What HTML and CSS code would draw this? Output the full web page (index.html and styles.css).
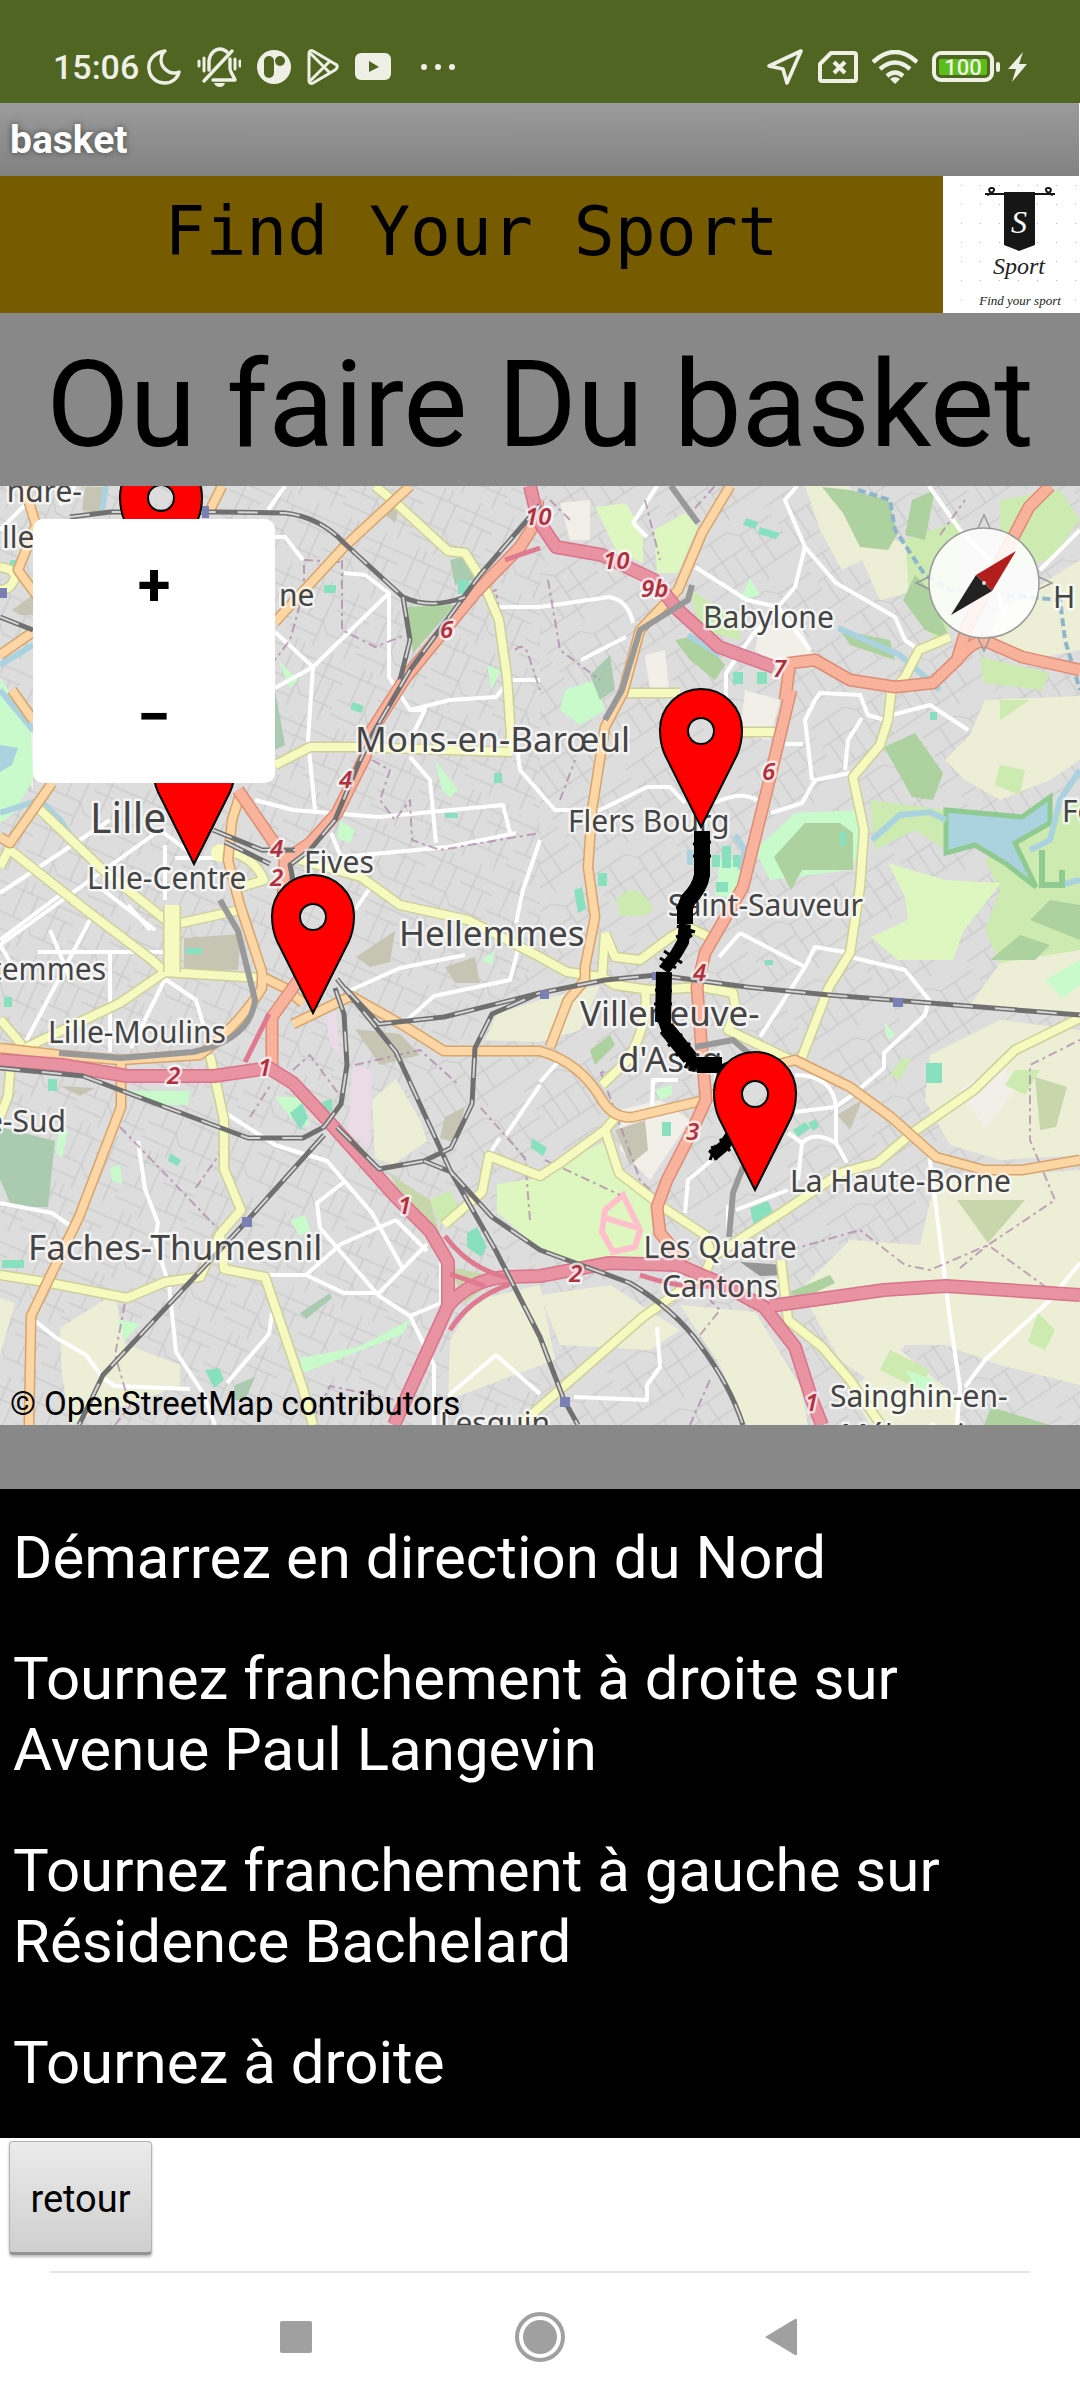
FILE: index.html
```html
<!DOCTYPE html>
<html lang="fr">

<head>
    <meta charset="UTF-8">
    <meta name="viewport" content="width=device-width, initial-scale=1.0">
    <title>basket</title>
    <link rel="stylesheet" href="styles.css">
</head>

<body>

    <!-- Status bar -->
    <div class="status-bar">
        <div class="status-group">
            <div class="status-pair">
                <span class="time">15:06</span>
                <svg width="34" height="36" viewBox="0 0 34 36" fill="none" stroke="#eef0e6" stroke-width="3.4" stroke-linejoin="round"><path d="M18 2C6 4 1 12 2 20c1 9 8 14 16 14 7 0 13-5 14-11-5 2-10 1-14-3-5-5-5-12-1-18z" /></svg>
            </div>
            <svg width="44" height="40" viewBox="0 0 44 40" fill="none" stroke="#eef0e6" stroke-width="3.4" stroke-linecap="round">
                <path d="M7 34L35 4" />
                <path d="M12 23V14C13 6 18 2 23 2c3 0 5 1 7 3M33 12v10c1 5 4 7 5 11H16" stroke-linejoin="round" />
                <path d="M2 14v5M7 11v13M43 14v5M38 12v10" stroke-width="3" />
                <path d="M17 36h11c-1 3-3 4-5 4s-5-1-6-4z" fill="#eef0e6" stroke="none" />
            </svg>
            <svg width="34" height="34" viewBox="0 0 34 34">
                <circle cx="17" cy="17" r="17" fill="#eef0e6" />
                <rect x="7" y="6" width="10" height="22" rx="5" fill="#516522" />
                <circle cx="23" cy="11" r="5" fill="#516522" />
            </svg>
            <svg width="32" height="36" viewBox="0 0 32 36" fill="none" stroke="#eef0e6" stroke-width="3" stroke-linejoin="round">
                <path d="M2 4c0-2 2-3 4-2l22 13c3 1 3 4 0 6L6 34c-2 1-4 0-4-2z" />
                <path d="M3 4l20 20M3 32l20-20" />
            </svg>
            <svg width="36" height="27" viewBox="0 0 36 27">
                <rect width="36" height="27" rx="6" fill="#eef0e6" />
                <path d="M14 8v11l10-5z" fill="#516522" />
            </svg>
            <svg width="48" height="8" viewBox="0 0 48 8" fill="#eef0e6"><circle cx="17" cy="4" r="3" /><circle cx="31" cy="4" r="3" /><circle cx="45" cy="4" r="3" /></svg>
        </div>
        <div class="status-group status-right">
            <svg width="38" height="38" viewBox="0 0 38 38" fill="none" stroke="#eef0e6" stroke-width="3.6" stroke-linejoin="round"><path d="M35 3L21 35l-4-14L3 18z" /></svg>
            <svg width="40" height="32" viewBox="0 0 40 32" fill="none" stroke="#eef0e6" stroke-width="4" stroke-linejoin="round">
                <path d="M13 2h23q2 0 2 2v24q0 2-2 2H4q-2 0-2-2V13z" />
                <path d="M16 11l11 11M27 11L16 22" />
            </svg>
            <svg width="46" height="34" viewBox="0 0 46 34" fill="none" stroke="#eef0e6" stroke-width="4.4">
                <path d="M1 12q22-20 44 0" /><path d="M8 19q15-13 30 0" /><path d="M15 26q8-7 16 0" />
                <path d="M18 29q5-4 10 0l-5 5z" fill="#eef0e6" stroke="none" />
            </svg>
            <div class="status-pair">
                <svg width="68" height="32" viewBox="0 0 68 32">
                    <rect x="2" y="2" width="58" height="27" rx="7" fill="none" stroke="#eef0e6" stroke-width="4" />
                    <rect x="7" y="8" width="48" height="16" rx="2" fill="#5bbd18" />
                    <rect x="64" y="11" width="4" height="10" rx="2" fill="#eef0e6" />
                    <text class="battery-level" x="31" y="24">100</text>
                </svg>
                <svg width="19" height="30" viewBox="0 0 19 30" fill="#eef0e6"><path d="M15 0L0 17h8L4 30l15-18h-8z" /></svg>
            </div>
        </div>
    </div>

    <div class="title-bar">basket</div>

    <!-- App header -->
    <header class="header">
        <div class="brand">Find Your Sport</div>
        <svg class="logo" viewBox="0 0 137 137" role="img" aria-label="Sport">
            <defs>
                <pattern id="dots" x="17" y="8" width="19" height="19" patternUnits="userSpaceOnUse">
                    <rect x="1" y="1" width="1" height="1" fill="#b5b5b5" />
                </pattern>
            </defs>
            <rect width="137" height="137" fill="#fff" />
            <rect width="137" height="137" fill="url(#dots)" />
            <path d="M42 18h19M92 18h20M44 19c8-2 9-8 4-7-4 1-1 6 4 6M110 19c-8-2-9-8-4-7 4 1 1 6-4 6" fill="none" stroke="#161616" stroke-width="2" />
            <path d="M61 16h31v53l-16 6-15-6z" fill="#161616" />
            <text class="logo-letter" x="76" y="57">S</text>
            <text class="logo-name" x="76" y="98">Sport</text>
            <text class="logo-tag" x="77" y="129">Find your sport</text>
        </svg>
    </header>

    <h1 class="page-title">Ou faire Du basket</h1>

    <!-- Map -->
    <div class="map">
        <svg class="map-canvas" viewBox="0 486 1080 939" role="img" aria-label="Carte de Lille">
            <defs>
                <pattern id="streets" width="74" height="66" patternUnits="userSpaceOnUse" patternTransform="rotate(24)">
                    <path d="M0 12h74M0 40h30l8 10h36M14 0v40M30 12v54M52 0v50M38 24h36M64 24v42M0 56h30M22 0v12" fill="none" stroke="#c5c5c5" stroke-width="1" />
                </pattern>
                <pattern id="streets-b" width="88" height="70" patternUnits="userSpaceOnUse" patternTransform="rotate(-34)">
                    <path d="M0 8h40l10 10h38M0 30h50M20 8v50M50 18v52M0 58h88M66 18v40M50 38h38M8 30v28M34 30v28" fill="none" stroke="#c5c5c5" stroke-width="1" />
                </pattern>

                <g id="yellow">
                    <path d="M375 486L396 503 448 551 465 553 482 580 499 620 507 677 512 752" />
                    <path d="M275 765L310 747 355 747 512 752" />
                    <path d="M37 807L103 870 172 925 240 910M10 850L86 910 152 960 165 972" />
                    <path d="M0 867L10 847M165 972L120 1003 25 1048M165 972L260 978" />
                    <path d="M215 850Q250 850 264 880L238 888M0 567Q18 570 14 580T0 590" />
                    <path d="M210 1055L224 1120 224 1169 241 1210 220 1234 224 1269 265 1277 303 1389 313 1425" />
                    <path d="M0 1275L45 1282 127 1298 165 1282 200 1277 220 1234M12 1050L8 1096 0 1117M0 1019L22 1045" />
                    <path d="M300 860L361 877 400 905 468 920 540 957 567 972 602 977 615 985 650 990 702 987 733 993 736 1010 728 1030 795 1062" />
                    <path d="M605 933L615 957 640 960 671 937 688 927 709 937M605 933L602 977" />
                    <path d="M626 693L680 693M735 732L775 732M645 990Q650 1020 628 1060L602 1085" />
                    <path d="M950 637L919 650 905 677 891 693 888 720 880 745 853 777 864 830 860 887 850 953 829 987 802 1057" />
                    <path d="M1080 1018L1015 1050 974 1090 912 1133 877 1163 840 1173 781 1213 712 1257 705 1273 643 1317 540 1407 520 1425" />
                    <path d="M444 1225L482 1192 489 1156 540 1176 560 1163 605 1130 619 1113M605 1130L619 1173 667 1210 705 1235 712 1257" />
                    <path d="M781 1260L788 1320 822 1347 850 1380 881 1425" />
                </g>
                <g id="orange">
                    <path d="M730 486L702 533 678 590 640 630 623 693 605 727 592 810 588 867 595 917 585 967 585 980 568 1000 550 1047" />
                    <path d="M293 1024L351 996 406 1027 444 1051 540 1051Q580 1062 602 1100 614 1119 633 1117L705 1100 755 1070 795 1060 850 1087 891 1117 936 1157 984 1170 1022 1170 1080 1160" />
                    <path d="M410 486L344 547 275 622M222 486L210 510" />
                    <path d="M0 1048L60 1055 120 1060 200 1055Q240 1024 262 988L262 972 240 905 228 860 232 820 240 795" />
                    <path d="M121 1062L121 1107 79 1217 31 1316 29 1425M52 783L10 843 0 837" />
                    <path d="M24 486L36 525 18 570 40 600M0 655L33 632M265 978L285 988 303 1003M12 690L33 720" />
                </g>
                <g id="trunk">
                    <path d="M538 500L534 525 520 547 475 593 406 677 372 730 365 757 337 813 310 843 285 860 283 900" />
                    <path d="M238 790L279 850M300 978L272 1017 272 1065" />
                    <path d="M1050 486L1029 507 1005 553 967 627 957 660 933 683 895 687 850 680 815 660 790 663 785 700" />
                    <path d="M957 660Q975 638 988 642L1022 657 1080 670" />
                    <path d="M791 690L767 790 743 887 705 953 697 987 702 1053 706 1100 691 1133 667 1180 657 1207 660 1233 685 1263" />
                </g>
                <g id="motorway">
                    <path d="M530 486L538 520 556 547 602 555 654 580 678 610 719 647 774 667" />
                    <path d="M0 1060L62 1065 127 1076 214 1076 269 1068 293 1083 331 1124 396 1197 430 1231 448 1262 448 1306 394 1425" />
                    <path d="M448 1306Q470 1280 505 1277L540 1276 609 1263 678 1265 720 1283 764 1307 795 1347 812 1400 822 1425" />
                    <path d="M770 1306L884 1290 946 1286 1080 1295" />
                </g>
                <g id="rail">
                    <path d="M70 517L110 512 220 512 285 513Q320 517 344 543L403 597Q430 610 465 597M403 597L410 640 400 680" />
                    <path d="M540 505L480 575 410 670 372 735 358 765 335 820 310 850 290 865 293 880M213 830L262 850 295 850M225 842L270 864M0 617L33 630" />
                    <path d="M0 1068L83 1076 165 1107 248 1138 303 1138 324 1127 341 1104 347 1065 344 1014 335 988" />
                    <path d="M324 1135L245 1223 103 1375 79 1425M337 979L396 1052 451 1172 496 1251 540 1337 564 1400 578 1425" />
                    <path d="M337 1127L379 1169 424 1161 451 1148 472 1104 475 1048 492 1014 540 993M424 1161L451 1172" />
                    <path d="M345 988L379 1024 444 1017 540 993 605 980 657 975 747 987 829 995 1080 1015" />
                    <path d="M451 1172L492 1217 540 1250 630 1283Q675 1310 700 1345 730 1385 743 1425" />
                </g>
                <path id="marker" fill-rule="evenodd" d="M0 0L-36 -72C-40 -81 -41 -89 -41 -97A41 41 0 0 1 41 -97C41 -89 40 -81 36 -72ZM-13 -96A13 13 0 1 0 13 -96A13 13 0 1 0 -13 -96Z" />
            </defs>

            <!-- Built-up ground -->
            <rect y="486" width="1080" height="939" fill="#dddddd" />
            <path d="M0 486H540V960L400 1100 540 1300V1425H0z" fill="url(#streets)" />
            <path d="M540 486H1080V1425H540V1300L400 1100 540 960z" fill="url(#streets-b)" />

            <!-- Fields -->
            <g fill="#ecefd5">
                <path d="M805 486L850 486 868 530 908 545 908 593 880 600 862 560 842 570 820 530z" />
                <path d="M1000 610L1080 560V650L1030 660 990 635zM970 735L985 700 1080 696V760L1050 780 1000 800 965 780 945 760z" />
                <path d="M970 1005L1000 963 1080 945V1012zM930 1055L1000 1020 1080 1030V1155L1000 1160 950 1145 925 1100z" />
                <path d="M800 1290L850 1240 920 1245 935 1180 1080 1170V1385L1000 1365 945 1345 905 1345 875 1385 840 1360z" />
                <path d="M540 1295L610 1285 680 1330 650 1350 560 1345zM680 1305L755 1312 800 1385 808 1425H746L720 1365z" />
                <path d="M850 1390L900 1350 960 1400 960 1425H870zM448 1400L450 1340 475 1300 540 1285 555 1360z" />
                <path d="M372 1100L396 1079 420 1120 427 1141 393 1165 375 1158zM485 1040L497 1014 540 1000 600 985 580 1030 540 1042z" />
                <path d="M60 1328L115 1293 125 1344 180 1365 180 1385 130 1405 100 1410 70 1425 62 1375zM0 1298L15 1303 0 1355z" />
            </g>
            <g fill="#f2efe9">
                <path d="M760 625L800 625 815 660 780 670 755 650zM560 503L590 500 590 540 570 540zM620 1110L660 1100 690 1120 650 1180 620 1150zM960 1090L1000 1060 1015 1090 985 1130z" />
                <path d="M745 690L780 700 770 740 740 735zM10 690L33 735 33 790 20 760zM645 655L665 650 670 700 650 690z" />
            </g>

            <!-- Parks and woods -->
            <g fill="#cdebb0">
                <path d="M1000 500L1060 490 1080 520 1050 560 1000 570zM980 657L1050 673 1042 690 984 683zM905 540L960 520 960 620 935 640 910 600z" />
                <path d="M985 860L1080 800V950L1000 963 985 930 1000 890zM870 800L946 810 946 850 915 830 875 850zM690 590L740 620 740 640 700 630z" />
                <path d="M1015 1070L1040 1070 1025 1095 1005 1085zM900 1060L912 1058 900 1080 890 1075zM1038 1313L1055 1330 1045 1350 1028 1342zM890 1350L930 1370 920 1390 880 1370zM1000 700L1030 700 1000 720zM1000 765L1025 770 1020 795 995 785z" />
                <path d="M430 1200L450 1190 460 1210 440 1225zM616 900Q632 880 648 900T620 915z" />
            </g>
            <g fill="#def6c0">
                <path d="M595 507L626 503 643 533 643 563 616 550zM654 530L685 513 698 527 678 573 657 573z" />
                <path d="M888 863L945 880 1001 883 964 930 953 960 898 960 871 937 908 920 905 897zM497 1184L540 1178 575 1155 605 1142 626 1173 654 1207 650 1255 600 1268 540 1250 497 1212z" />
            </g>
            <g fill="#c8facc">
                <path d="M0 677L31 727 33 780 14 813 0 823zM755 850L795 813 860 810 866 840 850 870 770 880zM565 690L595 680 605 710 580 725 560 710zM300 1358L358 1347 410 1320 403 1334 303 1373zM127 1091L190 1091 188 1105 160 1105z" />
                <path d="M1045 980L1080 960V985L1062 998zM340 820L355 830 350 843 337 838zM278 660L298 680 290 688zM117 1319L140 1324 125 1340zM740 600L760 595 750 578zM59 1122L68 1132 62 1158 56 1153zM435 760L458 790 450 797 442 790zM487 665L500 670 492 690zM482 960L495 950 492 965zM905 1370L935 1380 920 1392zM275 1097L300 1097 310 1127 290 1117zM290 1220L305 1215 310 1230 300 1236zM186 1220L196 1236 190 1226z" />
                <path d="M720 860L745 860 740 900 715 895zM110 1169L120 1164 122 1184 112 1181zM655 1090L672 1085 672 1095 660 1100zM883 1020L895 1035 888 1040z" />
            </g>
            <g fill="#aed1a0">
                <path d="M822 487L850 490 888 500 898 533 888 550 860 547 843 513zM774 857L805 823 840 823 853 833 853 870 802 870 791 890z" />
                <path d="M884 747L915 733 943 773 933 800 912 797zM406 607L455 605 413 653zM903 600L915 575 930 590 950 640 925 630zM990 960L1020 935 1050 945 1035 960zM912 500L935 490 925 540 905 535z" />
                <path d="M675 640L700 635 725 665 715 680 690 660zM840 630L890 640 895 660 850 645zM590 1050L610 1035 615 1045 595 1065zM991 1407L1050 1425H984zM1080 940L1030 920 1050 900 1080 905zM790 1292L830 1275 835 1283 800 1300z" />
                <path d="M590 675L610 655 615 690 600 700z" fill="#aacbaf" />
            </g>
            <g fill="#c8d7ab">
                <path d="M957 1200L1025 1200 988 1243zM1035 1077L1067 1087 1056 1127 1040 1130zM390 1174L430 1200 440 1236 400 1195zM450 1267L500 1277 465 1303z" />
            </g>
            <g fill="#aacbaf">
                <path d="M0 1127L55 1141 48 1207 12 1207 0 1179zM275 690L285 745 275 750zM300 1313L330 1293 332 1298 306 1319zM235 1385L255 1377 245 1400 232 1400zM450 560L470 555 475 580 455 585z" />
            </g>
            <g fill="#c6c5b3">
                <path d="M184 938L241 934 238 970 184 970zM85 487L108 487 100 515 82 510zM12 610L33 595 33 615 20 615zM356 957L395 931 390 962 370 967zM445 967L475 957 480 983 455 983zM355 1029L400 1034 420 1055 380 1065zM615 1130L645 1120 648 1150 630 1165zM837 1115L862 1100 850 1130zM445 1117L465 1107 455 1143 440 1138zM380 510L400 505 395 523zM60 1086L95 1088 80 1096z" />
            </g>
            <path d="M353 1065L372 1070 370 1148 348 1132zM325 1014L336 1012 340 1055 330 1045z" fill="#ebdbe8" />

            <!-- Water -->
            <path d="M946 810L1022 817 1050 797 1050 823 1015 843 1036 887 1005 863 975 845 946 853z" fill="#aad3df" stroke="#8fca91" stroke-width="5" />
            <g fill="none" stroke="#aad3df" stroke-width="6">
                <path d="M872 840L900 815 930 812 946 820M1080 770L1060 800 1050 840 1030 850M0 665L33 645M0 690L33 730M0 813L40 800 60 820 80 850M838 628L900 655 940 690M106 486L102 510M688 635L720 655" />
                <path d="M858 490L890 500 895 530 925 575 950 590 1060 600 1065 640 1080 690" stroke="#8fb5cc" stroke-width="4" stroke-dasharray="8 4" />
                <path d="M735 835L745 850 740 870M690 850V865M1060 885L1080 880" />
            </g>
            <path d="M0 745L18 748 12 765 0 772z" fill="#aad3df" />
            <path d="M1042 850V885H1062V870" fill="none" stroke="#8fca91" stroke-width="6" />

            <!-- Sports grounds -->
            <g fill="#88e0be">
                <path d="M324 585h12v8h-12zM458 580h11v14h-11zM353 702l11 4-3 7-11-4zM494 773h8v10h-8zM445 813h13v5h-13zM746 518l12 4-3 7-12-4zM760 527l20 6-4 6-18-5zM733 672h10v12h-10zM757 672h10v12h-10zM712 855h8v12h-8zM722 846h9v22h-9zM733 855h7v12h-7zM716 882h12v10h-12zM598 873h9v13h-9zM574 890l8-3 4 22-8 4zM926 1063h16v20h-16zM662 1122h9v14h-9z" />
                <path d="M750 1208l18-7 9 20-22 10zM793 1130l12-8 5 6-12 9zM808 1123l8-4 3 8-6 4zM290 1113l12-10 6 15-8 12zM322 1102l10-3v12l-8 2zM467 1233l10-6 10 20-6 10-14-10zM170 1153l11 7-3 6-10-5zM48 1079h9v12h-9zM186 948h16v6h-16zM2 1260h22v8H2zM205 1370l14-2 5 12-10 8zM4 997h8v10H4zM10 560h12v8H10zM840 832h6v14h-6zM930 712h7v8h-7zM315 936h8v6h-8zM765 960h8v5h-8zM532 1138l15 10-4 8-12-8z" />
            </g>
            <path d="M605 1210L623 1195 640 1230 635 1247 613 1252 602 1232zM605 1218L638 1228" fill="none" stroke="#ffc0cb" stroke-width="6" />
            <path d="M740 1262L785 1265 785 1275 760 1276z" fill="#969696" />

            <!-- Local roads -->
            <g class="local">
                <path d="M275 537L285 537 303 560M344 573L365 575 389 593 389 677 410 710 450 700 496 697 510 680 540 680M389 593L313 667 308 740 315 810M275 632L313 667 275 688" />
                <path d="M255 800L293 810 379 817 503 805 510 833M410 757L430 780 436 843M331 833L341 857 448 847 516 833M540 840L523 890 516 923M499 607H540M285 486L268 510M410 710L425 710 410 740" />
                <path d="M517 747L520 770 555 810 600 810 647 787 670 787 685 803M715 803Q740 790 757 800M771 813L802 803 815 780 850 773M812 780L805 720 815 700 820 693 860 695 868 715 885 720M845 770L848 740 862 718M888 716L930 705 968 730M785 744H803" />
                <path d="M797 486L785 500 805 547 795 587 778 607 754 633 726 673 726 700M805 547L836 583 895 617 905 640 919 650M695 567L747 600 778 607 810 650M657 486L633 523 647 537M540 607L609 597Q628 600 633 623M581 660L626 637M929 486L960 530 990 560 1005 620M1080 530L1040 570" />
                <path d="M850 957L905 970 929 1000 925 1015 884 1053 884 1068 850 1097 835 1107 795 1112M740 933L805 967 760 1037M805 967L815 947 850 953M740 933L719 957M929 1153L936 1207 950 1320 960 1387 957 1425M1080 1263L1050 1300 985 1360 965 1387" />
                <path d="M795 1075Q833 1075 836 1107V1143L847 1163M788 1133L802 1143Q815 1130 836 1143M802 1143L798 1180M712 1160L688 1180 685 1213M736 1210L788 1190M574 1397L647 1400 647 1385 660 1367 657 1327M652 1110L653 1080 678 1080M540 1082L560 1060M728 1205V1235" />
                <path d="M138 1141L145 1189 158 1223 155 1241 169 1285 176 1352 203 1393 215 1425M34 1320L55 1337 86 1355 103 1378 115 1386 190 1389M227 1383L269 1334 272 1313M0 1203L52 1213 72 1227M227 1114L275 1145 327 1161 372 1213 403 1269M344 1182L317 1203 320 1228 379 1296 410 1316 441 1303V1262" />
                <path d="M396 1220L341 1244 306 1275H269M306 1275L344 1293H379L427 1244M396 1220L427 1251M410 1316L434 1365V1425M448 1396L496 1355 540 1394M351 990L400 968 465 955M406 1021L434 996 510 980 523 931M540 1085L506 1135M0 945L160 830 200 860M0 893L110 820M0 945L20 978M490 1153L500 1138" />
                <path d="M38 952H165M110 950V1052M24 1045L90 920M165 979L131 1048M165 979L196 1000 203 1024M0 940L60 895M90 880L155 930M175 858H215M165 845V900M355 910L372 885M0 530L30 500M60 505L75 486M128 905L150 930M70 978L50 930" />
            </g>

            <g class="boundary">
                <path d="M304 565V590L290 640 275 660M342 560V630L375 647 405 635M304 560L342 562M470 600L496 590 505 655M515 650Q525 640 530 660L540 690M372 760L390 770 380 800 395 820 410 800 412 840 440 850 540 833" />
                <path d="M615 1080L600 1070 640 1180 680 1220 710 1240M790 1250L860 1230 905 1265 930 1270 988 1245 1055 1200 1030 1140 1030 1065 1080 1040M960 1268L988 1245 1050 1290M545 1160L620 1195M700 1335L720 1310 710 1300" />
                <path d="M120 1127L220 1231M224 1148L195 1189M293 1070L310 1055 340 1096M250 1117L270 1086M355 1065L420 1050 460 1086M115 1425L130 1406 115 1355 125 1303M310 1425L330 1386 400 1401M548 580L560 650 600 680M645 500L660 560M940 535L965 500M570 520L550 500M695 508L715 486M560 800L575 760M530 1220L525 1158 480 1107M690 1425L710 1380" />
            </g>

            <use href="#yellow" class="road yellow-edge" />
            <use href="#yellow" class="road yellow" />
            <path d="M172 905V972" class="road yellow-edge wide-edge" />
            <path d="M172 905V972" class="road yellow wide" />
            <circle cx="220" cy="853" r="9" fill="#f7fabf" />
            <use href="#orange" class="road orange-edge" />
            <use href="#orange" class="road orange" />
            <use href="#trunk" class="road trunk-edge" />
            <use href="#trunk" class="road trunk" />
            <use href="#motorway" class="road motorway-edge" />
            <use href="#motorway" class="road motorway" />
            <path d="M269 1014L245 1062M445 1236Q470 1270 510 1278M450 1274L485 1286M450 1330Q470 1298 510 1284M640 1275Q690 1292 720 1284M505 560L540 548" class="road ramp" />
            <path d="M220 900L238 931 255 1000Q250 1040 193 1052L121 1058 59 1053M671 486L698 523M692 585L688 600 640 630 622 690 605 720M695 1047L733 1040 753 1057M743 1167L733 1193 729 1237" class="road metro" />
            <use href="#rail" class="rail" />
            <use href="#rail" class="rail-dash" />

            <g fill="#7b80b4">
                <path d="M540 990h9v9h-9zM893 998h10v9h-10zM242 1217h10v10h-10zM560 1397h10v10h-10zM202 506h7v12h-7zM652 972h9v8h-9zM0 588h7v10H0z" />
            </g>

            <!-- Places -->
            <g class="place">
                <text x="279" y="606">ne</text>
                <text x="82" y="502" text-anchor="end">ndre-</text>
                <text x="2" y="548">lle</text>
                <text x="703" y="628">Babylone</text>
                <text x="1053" y="608">H</text>
                <text x="1062" y="822">Fo</text>
                <text x="568" y="832">Flers Bourg</text>
                <text x="668" y="916">Saint-Sauveur</text>
                <text x="87" y="889">Lille-Centre</text>
                <text x="304" y="873">Fives</text>
                <text x="106" y="980" text-anchor="end">temmes</text>
                <text x="48" y="1043">Lille-Moulins</text>
                <text x="66" y="1132" text-anchor="end">e-Sud</text>
                <text x="790" y="1192">La Haute-Borne</text>
                <text x="720" y="1258" text-anchor="middle">Les Quatre</text>
                <text x="720" y="1297" text-anchor="middle">Cantons</text>
                <text x="830" y="1407">Sainghin-en-</text>
                <text x="910" y="1446" text-anchor="middle">Mélantois</text>
                <text x="550" y="1434" text-anchor="end">Lesquin</text>
            </g>
            <g class="place town">
                <text x="355" y="752">Mons-en-Barœul</text>
                <text x="399" y="946">Hellemmes</text>
                <text x="28" y="1260">Faches-Thumesnil</text>
                <text x="580" y="1026">Villeneuve-</text>
                <text x="618" y="1072">d'Ascq</text>
            </g>
            <text class="place city" x="90" y="833">Lille</text>
            <g class="junction">
                <text x="525" y="525">10</text>
                <text x="603" y="569">10</text>
                <text x="641" y="597">9b</text>
                <text x="773" y="677">7</text>
                <text x="440" y="638">6</text>
                <text x="339" y="788">4</text>
                <text x="270" y="857">4</text>
                <text x="270" y="886">2</text>
                <text x="762" y="780">6</text>
                <text x="693" y="981">4</text>
                <text x="686" y="1140">3</text>
                <text x="167" y="1084">2</text>
                <text x="258" y="1076">1</text>
                <text x="398" y="1214">1</text>
                <text x="569" y="1282">2</text>
                <text x="805" y="1411">1</text>
            </g>

            <!-- Route -->
            <g class="route">
                <path d="M702 831L702 875Q700 888 688 900L685 908 685 924M664 972L663 1022M666 1028L690 1058M697 1065H722" />
                <path class="route-zigzag" d="M685 924L683 942 676 954 664 970M663 1018L668 1032 690 1058 698 1068M722 1064L730 1082M732 1134L724 1146 712 1156" />
                <path class="route-ticks" d="M693 844l18-2M693 856h18M676 908l18-5M677 926l18 6M676 937l18-6M678 945l14-10M680 948l10-15M664 951l18 12M660 958l16 10M660 967l15-8M655 990l17 1M654 1004h18M656 1020l17 8M668 1046l14-12M676 1056l14-13M685 1068l9-16M690 1071l4-17M716 1060l10 16M709 1151l12 2M710 1160l6-15M716 1160l-4-14M720 1139l10 12" />
            </g>

            <g class="markers">
                <use href="#marker" x="161" y="594" />
                <use href="#marker" x="194" y="864" />
                <use href="#marker" x="313" y="1013" />
                <use href="#marker" x="701" y="827" />
                <use href="#marker" x="755" y="1190" />
            </g>
        </svg>

        <div class="zoom">
            <button type="button" aria-label="Zoom avant">+</button>
            <button type="button" aria-label="Zoom arrière">−</button>
        </div>

        <svg class="compass" viewBox="0 0 140 140" role="img" aria-label="Boussole">
            <circle cx="70" cy="70" r="55" fill="#fff" fill-opacity="0.86" stroke="#999" stroke-width="1.5" />
            <path d="M64 15L70 2l6 13M64 125l6 13 6-13M15 64L2 70l13 6M125 64l13 6-13 6" fill="none" stroke="#999" stroke-width="1.5" />
            <path d="M102 38L78 78 62 62z" fill="#b21e1e" />
            <path d="M37 102L62 62 78 78z" fill="#222" />
            <circle cx="70" cy="70" r="2" fill="#ddd" />
        </svg>

        <div class="attribution">© OpenStreetMap contributors</div>
    </div>

    <!-- Directions -->
    <ol class="directions">
        <li>Démarrez en direction du Nord</li>
        <li>Tournez franchement à droite sur Avenue Paul Langevin</li>
        <li>Tournez franchement à gauche sur Résidence Bachelard</li>
        <li>Tournez à droite</li>
    </ol>

    <footer class="footer">
        <button type="button" class="back">retour</button>
    </footer>

    <!-- System navigation -->
    <nav class="system-nav">
        <button type="button" aria-label="Applications récentes">
            <svg width="50" height="52" viewBox="0 0 50 52"><rect x="9" y="10" width="32" height="32" rx="2" fill="#a0a0a0" /></svg>
        </button>
        <button type="button" aria-label="Accueil">
            <svg width="50" height="52" viewBox="0 0 50 52"><circle cx="25" cy="26" r="23" fill="none" stroke="#a0a0a0" stroke-width="4" /><circle cx="25" cy="26" r="17" fill="#a0a0a0" /></svg>
        </button>
        <button type="button" aria-label="Retour">
            <svg width="50" height="52" viewBox="0 0 50 52"><path d="M6 26L36 8q2-1 2 1v34q0 2-2 1z" fill="#a0a0a0" /></svg>
        </button>
    </nav>

</body>

</html>
```
FILE: styles.css
```css
* {
    box-sizing: border-box;
}

body {
    margin: 0;
    background-color: #ffffff;
    font-family: Roboto, sans-serif;
    color: #000000;
}

button {
    margin: 0;
    padding: 0;
    border: none;
    background: none;
    font-family: inherit;
    color: inherit;
    cursor: pointer;
}

svg {
    display: block;
    flex-shrink: 0;
}

/* Status bar */
.status-bar {
    display: flex;
    justify-content: space-between;
    align-items: center;
    height: 103px;
    padding: 30px 53px 0;
    background-color: #516522;
}

.status-group {
    display: flex;
    align-items: center;
    gap: 16px;
}

.status-right {
    gap: 14px;
}

.status-pair {
    display: flex;
    align-items: center;
    gap: 8px;
}

.time {
    font-size: 34px;
    font-weight: 500;
    line-height: 40px;
    color: #eef0e6;
}

.battery-level {
    font-size: 22px;
    font-weight: 500;
    text-anchor: middle;
    fill: #eef0e6;
}

.title-bar {
    height: 73px;
    padding: 0 10px;
    border-right: 1px solid #ffffff;
    background: linear-gradient(#9b9b9b, #828282);
    font-size: 39px;
    font-weight: 700;
    line-height: 75px;
    color: #ffffff;
    text-shadow: 0 0 6px #444444;
}

/* Header */
.header {
    display: flex;
    background-color: #775b00;
}

.brand {
    flex: 1;
    padding-top: 16px;
    font-family: "DejaVu Sans Mono", monospace;
    font-size: 68px;
    line-height: 80px;
    text-align: center;
}

.logo {
    width: 137px;
    height: 137px;
}

.logo text {
    font-family: "Liberation Serif", serif;
    font-style: italic;
    text-anchor: middle;
    fill: #222222;
}

.logo .logo-letter {
    font-size: 32px;
    fill: #ffffff;
}

.logo-name {
    font-size: 24px;
}

.logo-tag {
    font-size: 13px;
}

.page-title {
    margin: 0;
    padding: 22px 0 11px;
    background-color: #888888;
    font-size: 121px;
    font-weight: 400;
    line-height: 140px;
    text-align: center;
}

/* Map */
.map {
    position: relative;
    padding-bottom: 64px;
    background-color: #888888;
}

.map-canvas {
    width: 100%;
    height: auto;
}

.local,
.boundary,
.rail,
.rail-dash,
.road,
.route {
    fill: none;
    stroke-linejoin: round;
}

.local {
    stroke: #ffffff;
    stroke-width: 4px;
}

.boundary {
    stroke: #ac83a8;
    stroke-width: 2px;
    stroke-dasharray: 9 4 3 4;
    opacity: 0.7;
}

.yellow-edge {
    stroke: #cdd09c;
    stroke-width: 11px;
}

.yellow {
    stroke: #f7fabf;
    stroke-width: 8px;
}

.wide-edge {
    stroke-width: 18px;
}

.wide {
    stroke-width: 15px;
}

.orange-edge {
    stroke: #d7a56c;
    stroke-width: 11px;
}

.orange {
    stroke: #fcd6a4;
    stroke-width: 8px;
}

.trunk-edge {
    stroke: #dd8d76;
    stroke-width: 13px;
}

.trunk {
    stroke: #f9b29c;
    stroke-width: 10px;
}

.motorway-edge {
    stroke: #d9748a;
    stroke-width: 14px;
}

.motorway {
    stroke: #e892a2;
    stroke-width: 11px;
}

.ramp {
    stroke: #e07a90;
    stroke-width: 5px;
}

.metro {
    stroke: #999999;
    stroke-width: 6px;
}

.rail {
    stroke: #707070;
    stroke-width: 5px;
}

.rail-dash {
    stroke: #d4d4d4;
    stroke-width: 2px;
    stroke-dasharray: 20 22;
}

.place,
.junction {
    font-family: "Noto Sans", sans-serif;
    paint-order: stroke;
    stroke: rgba(255, 255, 255, 0.7);
    stroke-width: 5px;
    stroke-linejoin: round;
}

.place {
    font-size: 30px;
    fill: #444444;
}

.town {
    font-size: 35px;
}

.city {
    font-size: 41px;
}

.junction {
    font-size: 24px;
    font-style: italic;
    font-weight: 600;
    fill: #b03040;
}

.route {
    stroke: #000000;
    stroke-width: 16px;
}

.route-zigzag {
    stroke-width: 12px;
}

.route-ticks {
    stroke-width: 3px;
}

.markers {
    fill: #ff0000;
    stroke: #000000;
    stroke-width: 2px;
}

.zoom {
    position: absolute;
    top: 33px;
    left: 33px;
    display: flex;
    flex-direction: column;
    width: 242px;
    border-radius: 10px;
    background-color: #ffffff;
}

.zoom button {
    height: 132px;
    font-size: 60px;
    font-weight: 700;
    line-height: 132px;
}

.compass {
    position: absolute;
    top: 27px;
    right: 26px;
    width: 140px;
    height: 140px;
}

.attribution {
    position: absolute;
    bottom: 64px;
    left: 10px;
    font-size: 33px;
    line-height: 42px;
}

/* Directions */
.directions {
    margin: 0;
    padding: 8px 13px 15px;
    background-color: #000000;
    list-style: none;
    color: #ffffff;
}

.directions li {
    padding: 25px 0;
    font-size: 60px;
    line-height: 71px;
}

.footer {
    padding: 3px 9px 16px;
}

.back {
    width: 143px;
    height: 114px;
    padding-top: 3px;
    border: 1px solid #b5b5b5;
    border-bottom: 3px solid #929292;
    border-radius: 4px;
    background: linear-gradient(#ebebeb, #cfcfcf);
    box-shadow: 0 2px 3px #bbbbbb;
    font-size: 38px;
}

.system-nav {
    display: flex;
    justify-content: center;
    align-items: center;
    gap: 194px;
    height: 129px;
    margin: 0 50px;
    border-top: 2px solid #e6e6e6;
}
```
